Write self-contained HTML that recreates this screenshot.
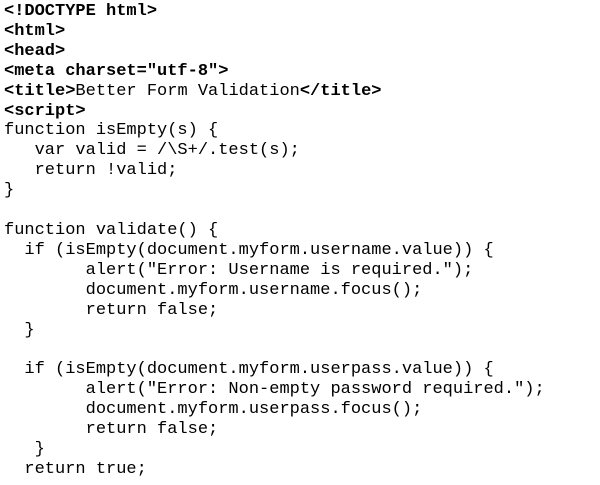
<!DOCTYPE html>
<html><head><meta charset="utf-8"><style>
html,body{margin:0;background:#fff;width:600px;height:485px;overflow:hidden}
pre{margin:0;padding:2px 0 0 4px;font-family:"Liberation Mono","Cousine","Courier New",Courier,monospace;font-size:17px;line-height:19.9px;color:#000}
b{font-weight:bold}
</style></head><body><pre><b>&lt;!DOCTYPE html&gt;</b>
<b>&lt;html&gt;</b>
<b>&lt;head&gt;</b>
<b>&lt;meta charset="utf-8"&gt;</b>
<b>&lt;title&gt;</b>Better Form Validation<b>&lt;/title&gt;</b>
<b>&lt;script&gt;</b>
function isEmpty(s) {
   var valid = /\S+/.test(s);
   return !valid;
}

function validate() {
  if (isEmpty(document.myform.username.value)) {
        alert("Error: Username is required.");
        document.myform.username.focus();
        return false;
  }

  if (isEmpty(document.myform.userpass.value)) {
        alert("Error: Non-empty password required.");
        document.myform.userpass.focus();
        return false;
   }
  return true;</pre></body></html>
